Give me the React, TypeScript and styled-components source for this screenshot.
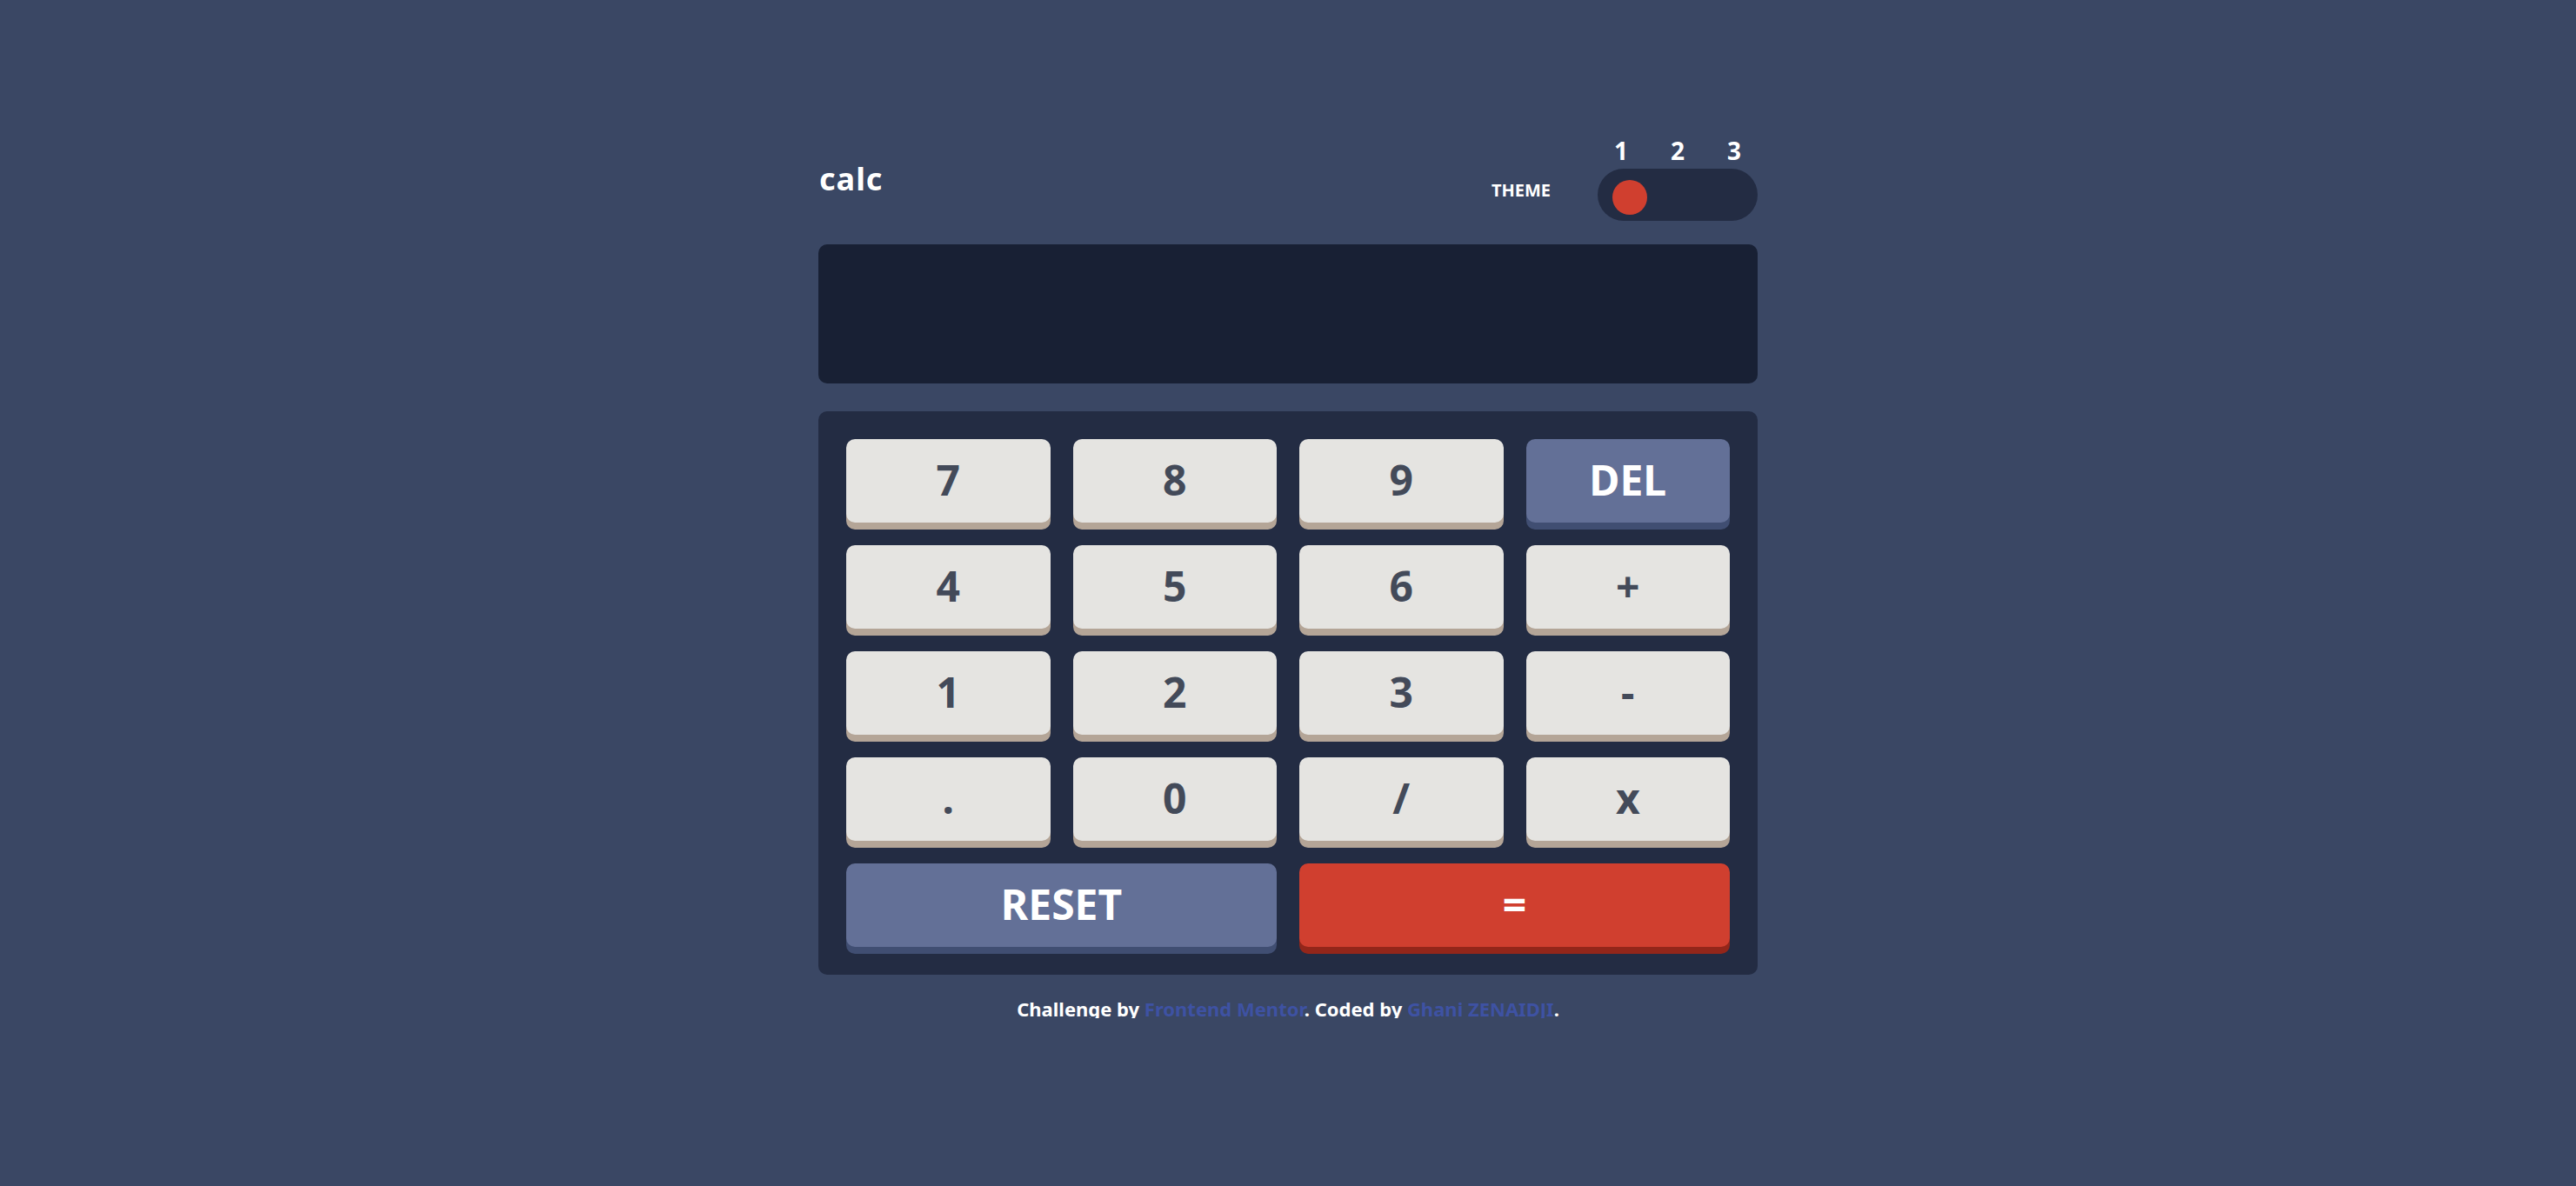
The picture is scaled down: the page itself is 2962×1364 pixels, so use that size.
import React from 'react';
import styled, {createGlobalStyle} from 'styled-components';

const GlobalStyle = createGlobalStyle`
  html, body {
    margin: 0;
    padding: 0;
    background: #3a4764;
    font-family: "Noto Sans", "Open Sans", sans-serif;
  }
`

const Wrapper = styled.main`
  width: 1080px;
  margin: 0 auto;
  padding-top: 159px;
  display: flex;
  flex-direction: column;
`

const Header = styled.header`
  height: 95px;
  display: flex;
  justify-content: space-between;
  align-items: flex-end;
  color: #fff;
`

const Logo = styled.h1`
  margin: 0 0 30px 1px;
  font-size: 36px;
  line-height: 36px;
  font-weight: 700;
  letter-spacing: 1px;
`

const ThemeBox = styled.div`
  display: flex;
  align-items: flex-end;
  gap: 54px;
`

const ThemeLabel = styled.span`
  margin-bottom: 25px;
  font-size: 20px;
  line-height: 20px;
  font-weight: 700;
`

const Switcher = styled.div`
  display: flex;
  flex-direction: column;
  width: 184px;
`

const Numbers = styled.div`
  display: flex;
  justify-content: space-between;
  padding: 0 17px;
  font-size: 28px;
  line-height: 28px;
  font-weight: 700;

  span {
    width: 20px;
    text-align: center;
  }
`

const Toggle = styled.div`
  margin-top: 7px;
  height: 60px;
  box-sizing: border-box;
  padding: 13px 17px 0;
  border-radius: 30px;
  background: #232c43;
`

const Knob = styled.div`
  width: 40px;
  height: 40px;
  border-radius: 50%;
  background: #d03f2f;
`

const Screen = styled.div`
  margin-top: 27px;
  height: 160px;
  border-radius: 10px;
  background: #182034;
`

const Keypad = styled.div`
  margin-top: 32px;
  padding: 32px;
  border-radius: 10px;
  background: #232c43;
  display: grid;
  grid-template-columns: repeat(4, 1fr);
  grid-auto-rows: 96px;
  gap: 26px;
`

type Kind = 'num' | 'accent' | 'equal';

const palette: Record<Kind, {bg: string; shadow: string; color: string}> = {
  num: {bg: '#e5e4e1', shadow: '#b4a597', color: '#434a59'},
  accent: {bg: '#637097', shadow: '#404e72', color: '#ffffff'},
  equal: {bg: '#d03f2f', shadow: '#93261a', color: '#ffffff'},
};

const Key = styled.button<{$kind: Kind; $wide?: boolean}>`
  grid-column: ${p => (p.$wide ? 'span 2' : 'span 1')};
  border: none;
  border-radius: 10px;
  background: ${p => palette[p.$kind].bg};
  box-shadow: 0 8px 0 ${p => palette[p.$kind].shadow};
  color: ${p => palette[p.$kind].color};
  font-family: "Noto Sans", "Open Sans", sans-serif;
  font-size: 48px;
  font-weight: 700;
  line-height: 1;
  padding: 0 0 2px;
  cursor: pointer;
`

const Footer = styled.footer`
  margin-top: 28px;
  text-align: center;
  color: #fff;
  font-size: 22px;
  line-height: 22px;
  font-weight: 700;

  a {
    color: #3e52a3;
  }
`

const keys: {label: string; kind: Kind}[] = [
  {label: '7', kind: 'num'},
  {label: '8', kind: 'num'},
  {label: '9', kind: 'num'},
  {label: 'DEL', kind: 'accent'},
  {label: '4', kind: 'num'},
  {label: '5', kind: 'num'},
  {label: '6', kind: 'num'},
  {label: '+', kind: 'num'},
  {label: '1', kind: 'num'},
  {label: '2', kind: 'num'},
  {label: '3', kind: 'num'},
  {label: '-', kind: 'num'},
  {label: '.', kind: 'num'},
  {label: '0', kind: 'num'},
  {label: '/', kind: 'num'},
  {label: 'x', kind: 'num'},
];

const App = () => {
  return (
    <>
      <GlobalStyle />
      <Wrapper>
        <Header>
          <Logo>calc</Logo>
          <ThemeBox>
            <ThemeLabel>THEME</ThemeLabel>
            <Switcher>
              <Numbers>
                <span>1</span>
                <span>2</span>
                <span>3</span>
              </Numbers>
              <Toggle>
                <Knob />
              </Toggle>
            </Switcher>
          </ThemeBox>
        </Header>
        <Screen />
        <Keypad>
          {keys.map(k => (
            <Key key={k.label} $kind={k.kind}>{k.label}</Key>
          ))}
          <Key $kind="accent" $wide>RESET</Key>
          <Key $kind="equal" $wide>=</Key>
        </Keypad>
        <Footer>
          Challenge by <a href="#">Frontend Mentor</a>. Coded by <a href="#">Ghani ZENAIDJI</a>.
        </Footer>
      </Wrapper>
    </>
  )
}

export default App;
